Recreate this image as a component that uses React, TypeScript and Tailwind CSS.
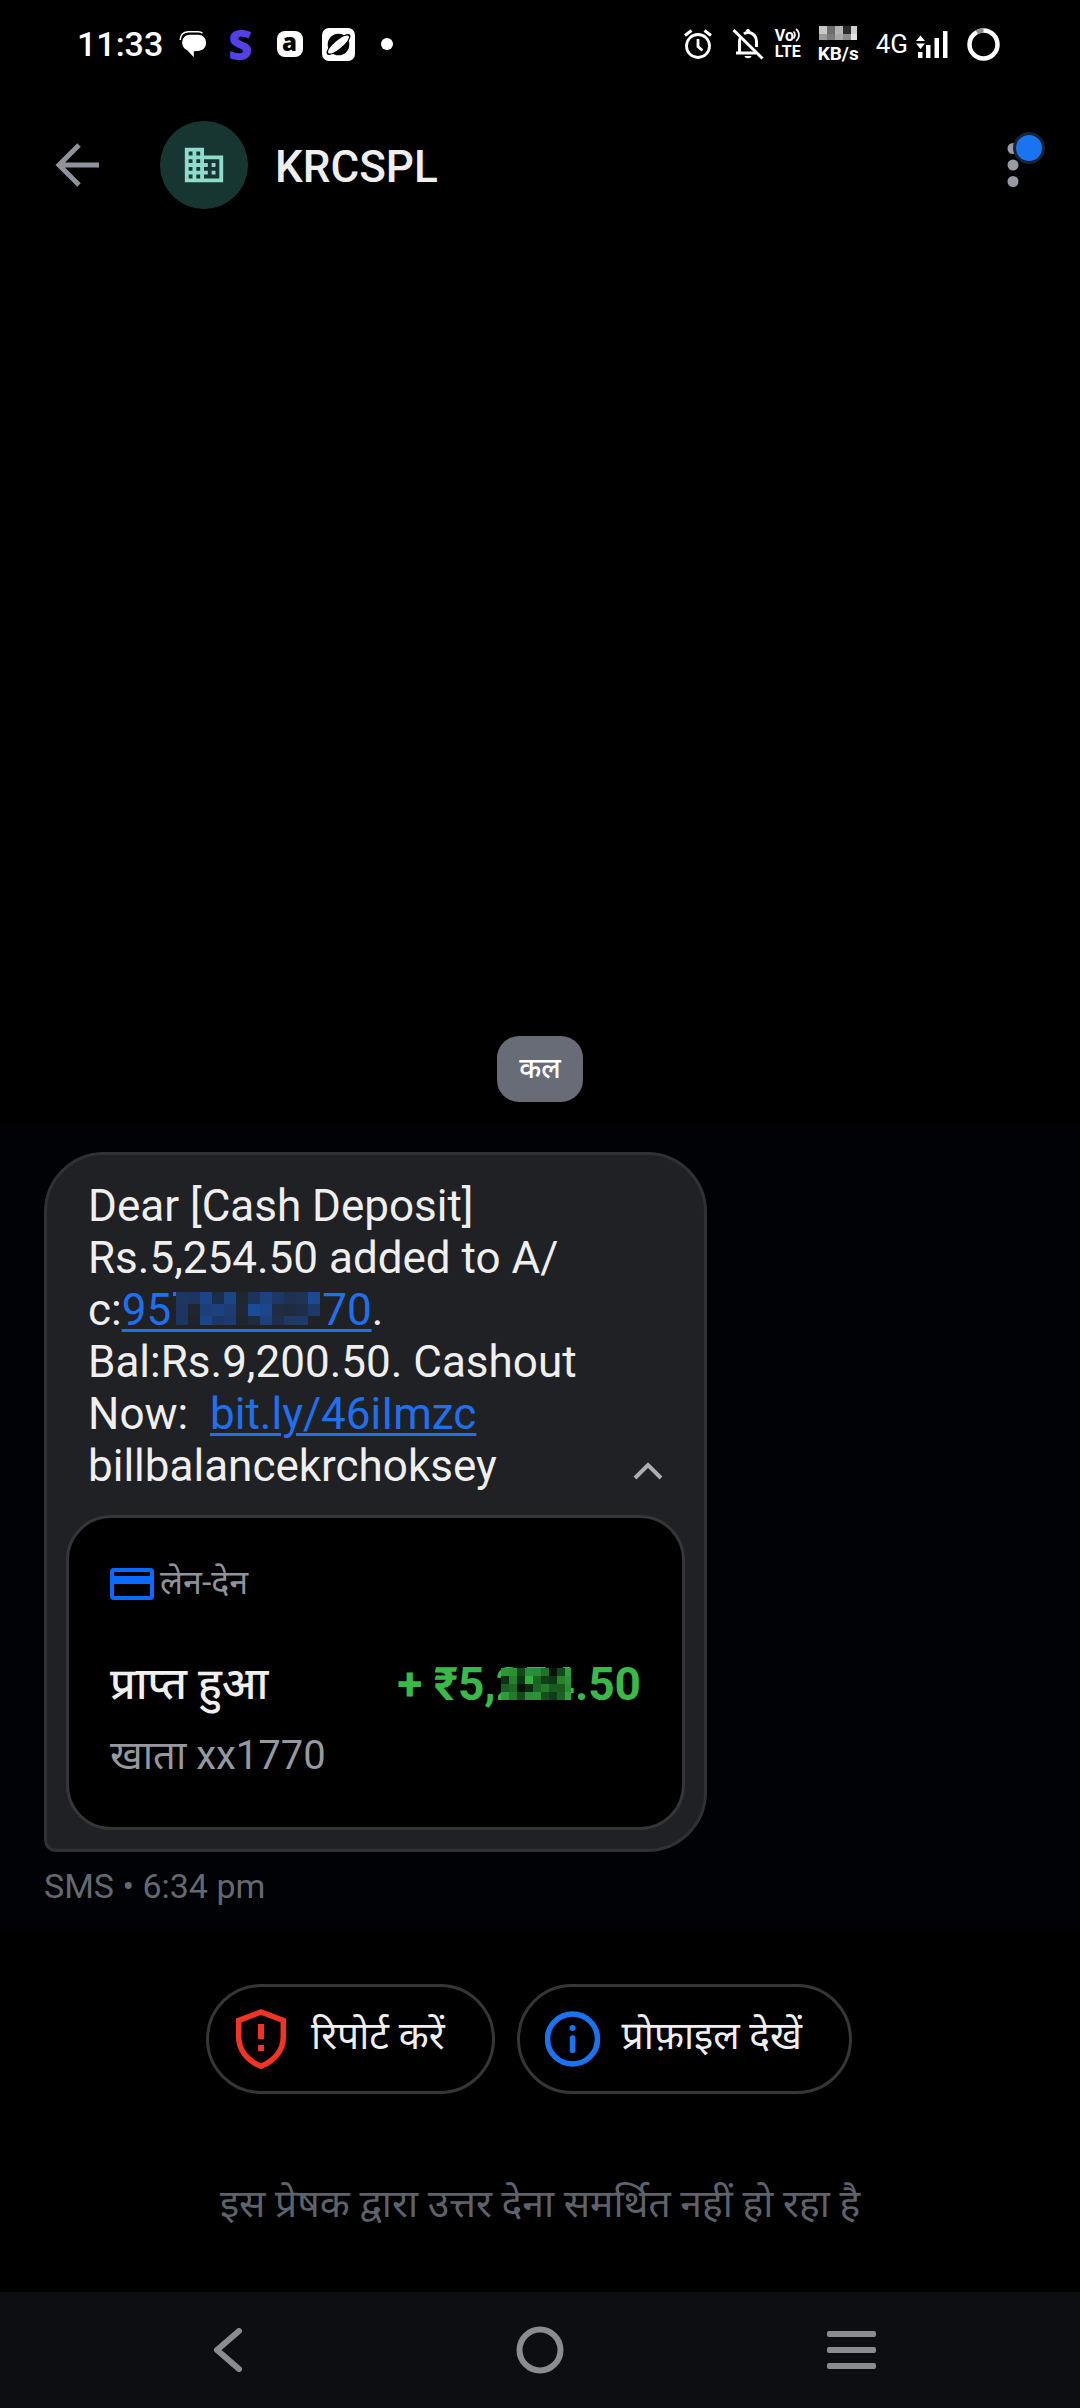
import type { ReactNode } from "react";

const PHONE_MASK = {
  cell: 12,
  width: 144,
  height: 33,
  rows: [
    ["#1d3763", "#1e3560", "#1b4587", "#1c2d4a", "#1b4585", "#1f2732", "#1e3359", "#1c427f", "#1d3864", "#1f3050", "#1f3354", "#1b4a92"],
    ["#1d3560", "#1f2630", "#1c3f7a", "#1b417f", "#1c3c72", "#1f2834", "#1b4c97", "#1b488d", "#1e2c44", "#1f2c40", "#1e2d48", "#1d3968"],
    ["#1d3661", "#1f242c", "#1b468a", "#1d3867", "#1c3b6e", "#1f262f", "#1f2b3f", "#1c4079", "#1e2f4c", "#1d3964", "#1d3a69", "#1f2329"],
  ],
};

const AMOUNT_MASK = {
  cell: 8,
  width: 70,
  height: 32,
  rows: [
    ["#2c9638", "#2b8f36", "#12471a", "#2a8f37", "#2b8c36", "#236f2c", "#051407", "#144a1b", "#2f9d3b"],
    ["#0c2f11", "#268031", "#0d3512", "#33b041", "#1c6325", "#113e17", "#0f3614", "#27812f", "#2c9438"],
    ["#1a5d22", "#1d6825", "#04130a", "#0c2b10", "#1d6626", "#227a2c", "#195c22", "#1a5a21", "#298c35"],
    ["#2e9c3a", "#227a2c", "#144a1b", "#2a8e36", "#2b9237", "#14501d", "#103c16", "#1b6124", "#309f3c"],
  ],
};

const SPEED_MASK = {
  cell: 8,
  width: 38,
  height: 14,
  rows: [
    ["#c9c9c9", "#6d6d6d", "#b4b4b4", "#2b2b2b", "#cfcfcf"],
    ["#9a9a9a", "#7b7b7b", "#a8a8a8", "#8a8a8a", "#e2e2e2"],
  ],
};

type Mask = { cell: number; width: number; height: number; rows: string[][] };

function Mosaic({ mask, className, children }: { mask: Mask; className?: string; children?: ReactNode }) {
  return (
    <svg
      width={mask.width}
      height={mask.height}
      viewBox={`0 0 ${mask.width} ${mask.height}`}
      shapeRendering="crispEdges"
      className={className}
      aria-hidden="true"
    >
      {mask.rows.map((row, y) =>
        row.map((fill, x) => (
          <rect
            key={`${x}-${y}`}
            x={x * mask.cell}
            y={y * mask.cell}
            width={Math.min(mask.cell, mask.width - x * mask.cell)}
            height={Math.min(mask.cell, mask.height - y * mask.cell)}
            fill={fill}
          />
        ))
      )}
      {children}
    </svg>
  );
}

function StatusBar() {
  return (
    <div className="flex h-[88px] items-center justify-between pl-[77px] pr-[80px] text-white">
      <div className="flex items-center">
        <span className="text-[34px] leading-[40px] font-medium">11:33</span>

        <svg width="28" height="28" viewBox="0 0 28 28" className="ml-[16px]" aria-hidden="true">
          <path
            d="M1.200 10C1.500 5 4.500 2 9 1.700H19C21 1.700 22.500 2.300 23.500 3.300"
            fill="none"
            stroke="#fff"
            strokeWidth="1.600"
          />
          <path
            d="M11 4.800H19C24 4.800 27 8.300 27 12.800C27 17.500 24 20.600 19.500 20.900L14.800 21.200V27.300L8.300 20.300C5 18.800 3.200 16.400 3.200 13C3.200 8 6.300 4.800 11 4.800Z"
            fill="#fff"
          />
        </svg>

        <span className="ml-[21px] font-['Open_Sans'] text-[42px] leading-[40px] font-extrabold text-[#5540e6]">
          S
        </span>

        <span className="ml-6 flex size-[26px] items-center justify-center rounded-[8px] bg-white pb-[4px] font-['Open_Sans'] text-[24px] leading-none font-extrabold text-black">
          a
        </span>

        <svg width="33" height="33" viewBox="0 0 33 33" className="ml-[19px]" aria-hidden="true">
          <rect width="33" height="33" rx="7" fill="#fff" />
          <circle cx="16.500" cy="16.500" r="10.800" fill="#000" />
          <ellipse cx="16.500" cy="16.500" rx="15" ry="5" fill="#000" transform="rotate(-40 16.500 16.500)" />
          <ellipse cx="16.500" cy="16.500" rx="13.200" ry="4" fill="#fff" transform="rotate(-40 16.500 16.500)" />
        </svg>

        <span className="ml-[26px] size-[12px] rounded-full bg-white" />
      </div>

      <div className="flex items-center">
        {/* alarm */}
        <svg width="28" height="30" viewBox="0 0 28 30" fill="none" stroke="#fff" aria-hidden="true">
          <circle cx="14" cy="17" r="11.500" strokeWidth="2.800" />
          <path d="M14 10V17.500L18.500 21.500" strokeWidth="2.800" />
          <path d="M1 6.500L7.500 1.500M27 6.500L20.500 1.500" strokeWidth="3" />
        </svg>

        {/* muted bell */}
        <svg width="32" height="32" viewBox="0 0 32 32" fill="none" stroke="#fff" className="ml-[20px]" aria-hidden="true">
          <path d="M1.500 2L30.500 30.500" strokeWidth="3" />
          <path d="M4 25H24M7.500 24V13.500C7.500 12 7.900 10.500 8.500 9.500M12 5.800C13 5 14.500 4.500 16 4.500C21 4.500 24.500 8.500 24.500 13.500V19" strokeWidth="3" />
          <path d="M13.500 3.500C13.500 0 18.500 0 18.500 3.500ZM12.500 28H19.500C19 31 13 31 12.500 28Z" fill="#fff" stroke="none" />
        </svg>

        <span className="relative ml-[11px] flex flex-col text-[16px] leading-[16px] font-bold">
          <span>Vo</span>
          <span>LTE</span>
          <svg width="8" height="14" viewBox="0 0 8 14" fill="none" stroke="#fff" strokeWidth="1.600" className="absolute top-0 right-0" aria-hidden="true">
            <path d="M0.500 3.500C2.500 5 2.500 9 0.500 10.500M3 1C7 4 7 10 3 13" />
          </svg>
        </span>

        <span className="ml-[17px] flex flex-col items-center gap-[4px]">
          <Mosaic mask={SPEED_MASK} />
          <span className="text-[19px] leading-[19px] font-bold">KB/s</span>
        </span>

        <span className="ml-[17px] text-[26px] leading-[32px]">4G</span>

        <svg width="32" height="28" viewBox="0 0 32 28" fill="#fff" className="ml-[8px]" aria-hidden="true">
          <path d="M4.500 5.500L9 11H0ZM0 13.500H9L4.500 19Z" />
          <path d="M2 22H6.500V28H2ZM10 15H14.500V28H10ZM18.500 8H23V28H18.500ZM27 1H31.500V28H27Z" />
        </svg>

        {/* battery ring */}
        <svg width="33" height="33" viewBox="0 0 33 33" fill="none" strokeWidth="4.500" className="ml-[19px]" aria-hidden="true">
          <circle cx="16.500" cy="16.500" r="14" stroke="#fff" />
          <path d="M9.800 4.200A14 14 0 0 1 16.500 2.500" stroke="#8c8c8c" />
        </svg>
      </div>
    </div>
  );
}

function Header() {
  return (
    <header className="flex h-[154px] items-center pl-[55px] pr-[37px]">
      <button aria-label="Back">
        <svg width="44" height="44" viewBox="0 0 44 44" fill="none" stroke="#8e939c" strokeWidth="5" aria-hidden="true">
          <path d="M24 2L4 22L24 42M4 22H44" />
        </svg>
      </button>

      <div className="ml-[61px] flex size-[88px] items-center justify-center rounded-full bg-[#183631]">
        <svg width="46" height="46" viewBox="0 0 24 24" fill="#8fdccb" aria-hidden="true">
          <path d="M12 7V3H2v18h20V7H12zM6 19H4v-2h2v2zm0-4H4v-2h2v2zm0-4H4V9h2v2zm0-4H4V5h2v2zm4 12H8v-2h2v2zm0-4H8v-2h2v2zm0-4H8V9h2v2zm0-4H8V5h2v2zm10 12h-8v-2h2v-2h-2v-2h2v-2h-2V9h8v10zm-2-8h-2v2h2v-2zm0 4h-2v2h2v-2z" />
        </svg>
      </div>

      <h1 className="ml-[27px] flex-1 pt-[4px] text-[44px] leading-[52px] font-medium text-[#efefef]">KRCSPL</h1>

      <button aria-label="More options" className="relative h-[44px] w-[36px]">
        <svg width="12" height="44" viewBox="0 0 12 44" fill="#969ba4" aria-hidden="true">
          <circle cx="6" cy="5.500" r="5.500" />
          <circle cx="6" cy="22" r="5.500" />
          <circle cx="6" cy="38.500" r="5.500" />
        </svg>
        <span className="absolute -top-[11px] left-[6px] size-[32px] rounded-full border-[3px] border-[#1c2330] bg-[#1a73f0]" />
      </button>
    </header>
  );
}

function TransactionCard() {
  return (
    <div className="mx-[19px] mt-[23px] mb-[19px] rounded-[45px] border-[3px] border-[#353638] bg-black px-[41px] pt-[42px] pb-[47px]">
      <div className="flex h-[48px] items-center gap-[6px]">
        <svg width="44" height="32" viewBox="0 0 44 32" aria-hidden="true">
          <rect x="2" y="2" width="40" height="28" rx="2" fill="none" stroke="#0b6bff" strokeWidth="4" />
          <rect x="2" y="8" width="40" height="8" fill="#0b6bff" />
        </svg>
        <span className="pb-[4px] text-[34px] leading-[44px] text-[#8f939a]">लेन-देन</span>
      </div>

      <div className="mt-[50px] flex items-center justify-between">
        <span className="text-[44px] leading-[52px] font-medium text-[#efefef]">प्राप्त हुआ</span>
        <span className="text-[46px] leading-[52px] font-bold text-[#39b947]">
          + ₹5,
          <span className="relative">
            254
            <Mosaic mask={AMOUNT_MASK} className="absolute top-[11px] left-[5px]" />
          </span>
          .50
        </span>
      </div>

      <p className="mt-[22px] text-[40px] leading-[48px] text-[#95999f]">खाता xx1770</p>
    </div>
  );
}

function Message() {
  return (
    <section className="bg-[#000206] px-[44px] pt-[27px] pb-[19px]">
      <div className="w-[663px] max-w-full rounded-[60px] rounded-bl-[12px] border-[3px] border-[#303133] bg-[#202124]">
        <div className="flex items-end justify-between pt-[25px] pr-[41px] pl-[41px]">
          <p className="text-[44px] leading-[52px] whitespace-pre-wrap text-[#efefef]">
            Dear [Cash Deposit]
            <br />
            Rs.5,254.50 added to A/
            <br />
            c:
            <a href="#account" className="whitespace-nowrap text-[#1f70ee] underline decoration-[3px] underline-offset-[4px]">
              95
              <Mosaic mask={PHONE_MASK} className="ml-[5px] mr-[2px] inline-block overflow-visible align-baseline">
                <rect x="-3" y="0" width="3" height="4" fill="#1f70ee" />
                <rect x="-6" y="37" width="153" height="3" fill="#1f70ee" />
              </Mosaic>
              70
            </a>
            .
            <br />
            Bal:Rs.9,200.50. Cashout
            <br />
            {"Now:  "}
            <a href="#link" className="text-[#1f70ee] underline decoration-[3px] underline-offset-[4px]">
              bit.ly/46iImzc
            </a>
            <br />
            billbalancekrchoksey
          </p>
          <button aria-label="Collapse" className="mb-[12px]">
            <svg width="30" height="18" viewBox="0 0 30 18" fill="none" stroke="#adaeb0" strokeWidth="4" aria-hidden="true">
              <path d="M2 16L15 3L28 16" />
            </svg>
          </button>
        </div>

        <TransactionCard />
      </div>

      <p className="mt-[10px] text-[34px] leading-[48px] text-[#646970]">SMS • 6:34 pm</p>
    </section>
  );
}

function ActionChip({ icon, children }: { icon: ReactNode; children: ReactNode }) {
  return (
    <button className="mr-[22px] flex h-[110px] items-center gap-[21px] rounded-full border-[3px] border-[#353638] pr-[47px] pl-[25px]">
      {icon}
      <span className="pb-[6px] text-[39px] leading-[56px] text-[#efefef]">{children}</span>
    </button>
  );
}

function NavBar() {
  return (
    <nav className="flex h-[116px] items-center justify-between bg-[#0d0e12] px-[203px]">
      <button aria-label="Back" className="px-[10px]">
        <svg width="30" height="44" viewBox="0 0 30 44" fill="none" stroke="#8b8c8e" strokeWidth="6" strokeLinecap="round" strokeLinejoin="round" aria-hidden="true">
          <path d="M26 3L4 22L26 41" />
        </svg>
      </button>
      <button aria-label="Home">
        <svg width="48" height="48" viewBox="0 0 48 48" fill="none" stroke="#8b8c8e" strokeWidth="6" aria-hidden="true">
          <circle cx="24" cy="24" r="20.500" />
        </svg>
      </button>
      <button aria-label="Recent apps">
        <svg width="50" height="38" viewBox="0 0 50 38" fill="#8b8c8e" aria-hidden="true">
          <rect width="49" height="6" y="0" rx="2" />
          <rect width="49" height="6" y="16" rx="2" />
          <rect width="49" height="6" y="32" rx="2" />
        </svg>
      </button>
    </nav>
  );
}

export default function App() {
  return (
    <div className="flex min-h-screen flex-col bg-black font-[Roboto,'Noto_Sans_Devanagari','Noto_Sans',sans-serif]">
      <StatusBar />
      <Header />

      <main className="flex flex-1 flex-col justify-end">
        <div className="mb-[23px] self-center rounded-[22px] bg-[#676c76] px-[22px] py-[9px] text-[28px] leading-[48px] font-medium text-white">
          कल
        </div>

        <Message />

        <div className="mt-[55px] flex justify-center">
          <ActionChip
            icon={
              <svg width="56" height="62" viewBox="0 0 56 62" fill="none" stroke="#f53325" strokeWidth="5.500" aria-hidden="true">
                <path d="M27 4L49.300 12.500V29C49.300 43 39.500 53.500 27 58.200C14.500 53.500 4.700 43 4.700 29V12.500Z" />
                <path d="M27 16V31M27 37V43" strokeWidth="6" />
              </svg>
            }
          >
            रिपोर्ट करें
          </ActionChip>
          <ActionChip
            icon={
              <svg width="56" height="56" viewBox="0 0 56 56" fill="none" stroke="#1a73f0" strokeWidth="5.500" aria-hidden="true">
                <circle cx="27.500" cy="28" r="25" />
                <path d="M27.500 27V39.500" strokeLinecap="round" />
                <circle cx="27.500" cy="17" r="3" fill="#1a73f0" stroke="none" />
              </svg>
            }
          >
            प्रोफ़ाइल देखें
          </ActionChip>
        </div>

        <p className="mt-[82px] mb-[60px] text-center text-[39px] leading-[56px] text-[#5e636b]">
          इस प्रेषक द्वारा उत्तर देना समर्थित नहीं हो रहा है
        </p>
      </main>

      <NavBar />
    </div>
  );
}
